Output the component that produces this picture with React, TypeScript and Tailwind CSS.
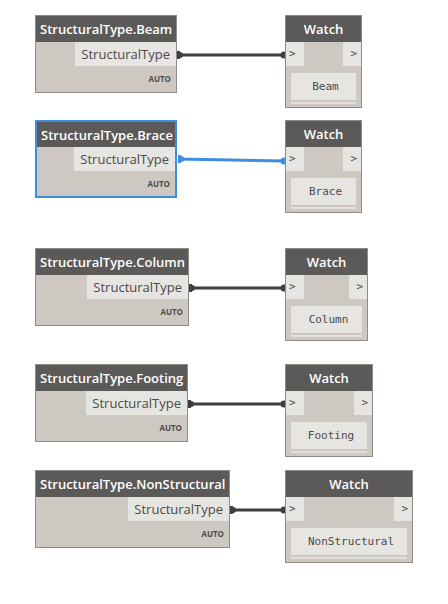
import React from "react";

type NodeProps = {
  x: number;
  y: number;
  width: number;
  title: string;
  selected?: boolean;
};

type WatchProps = {
  x: number;
  y: number;
  width: number;
  value: string;
};

const font = { fontFamily: '"Open Sans", "Liberation Sans", sans-serif' };
const mono = { fontFamily: '"DejaVu Sans Mono", "Liberation Mono", monospace' };

// code block node: header, one output port, lacing label
function CodeNode({ x, y, width, title, selected }: NodeProps) {
  return (
    <div
      className={
        "absolute flex flex-col bg-[#cdc9c2] " +
        (selected ? "border-2 border-[#3d8ee0]" : "border border-[#8f8c88]")
      }
      style={{ left: x, top: y, width, ...font }}
    >
      <div
        className={
          "bg-[#5c5a58] text-white font-semibold text-[13px] leading-[26px] px-[4px] whitespace-nowrap " +
          (selected ? "h-[25px] leading-[25px] px-[3px]" : "h-[26px]")
        }
      >
        {title}
      </div>
      <div className="flex justify-end h-[24px]">
        <div className="bg-[#e6e5e1] text-[#4a4a4a] text-[13px] leading-[24px] px-[6px] whitespace-nowrap">
          StructuralType
        </div>
      </div>
      <div
        className={
          "flex items-center justify-end pr-[5px] text-[8px] font-bold text-[#4f4d4b] " +
          (selected ? "h-[25px] pr-[4px]" : "h-[26px]")
        }
      >
        AUTO
      </div>
    </div>
  );
}

function WatchNode({ x, y, width, value }: WatchProps) {
  return (
    <div
      className="absolute flex flex-col bg-[#cdc9c2] border border-[#8f8c88] pb-[3px]"
      style={{ left: x, top: y, width, ...font }}
    >
      <div className="bg-[#5c5a58] text-white text-[13px] font-semibold h-[26px] leading-[26px] text-center">
        Watch
      </div>
      <div className="flex justify-between h-[24px] text-[11px] text-[#4a4a4a]">
        <div className="w-[18px] bg-[#e6e5e1] leading-[24px] pl-[3px]" style={mono}>
          &gt;
        </div>
        <div className="w-[18px] bg-[#e6e5e1] leading-[24px] text-right pr-[4px]" style={mono}>
          &gt;
        </div>
      </div>
      <div
        className="mx-[5px] mt-[7px] h-[27px] bg-[#e6e5e1] text-[11px] text-[#4a4a4a] leading-[27px] text-center pl-[4px]"
        style={mono}
      >
        {value}
      </div>
      <div className="mx-[5px] mt-[2px] h-[2px] bg-[#e2e0dc]" />
    </div>
  );
}

const wires = [
  { x1: 177, y1: 55, x2: 285, y2: 55, color: "#3f3f3f" },
  { x1: 178, y1: 159, x2: 285, y2: 161, color: "#3d8ee0" },
  { x1: 189, y1: 288, x2: 285, y2: 288, color: "#3f3f3f" },
  { x1: 188, y1: 404, x2: 285, y2: 404, color: "#3f3f3f" },
  { x1: 230, y1: 510, x2: 285, y2: 510, color: "#3f3f3f" },
];

export default function App() {
  return (
    <div className="relative w-[448px] h-[604px] bg-white overflow-hidden">
      <svg className="absolute inset-0" width={448} height={604}>
        {wires.map((w, i) => (
          <g key={i}>
            <line x1={w.x1} y1={w.y1} x2={w.x2} y2={w.y2} stroke={w.color} strokeWidth={3} />
            <rect x={w.x1} y={w.y1 - 4} width={3} height={8} fill={w.color} />
            <circle cx={w.x1 + 3} cy={w.y1} r={3} fill={w.color} />
            <circle cx={w.x2 - 1} cy={w.y2} r={3.5} fill={w.color} />
          </g>
        ))}
      </svg>

      <CodeNode x={35} y={15} width={142} title="StructuralType.Beam" />
      <WatchNode x={285} y={15} width={77} value="Beam" />

      <CodeNode x={35} y={120} width={142} title="StructuralType.Brace" selected />
      <WatchNode x={285} y={120} width={77} value="Brace" />

      <CodeNode x={35} y={248} width={154} title="StructuralType.Column" />
      <WatchNode x={285} y={248} width={83} value="Column" />

      <CodeNode x={35} y={364} width={153} title="StructuralType.Footing" />
      <WatchNode x={285} y={364} width={88} value="Footing" />

      <CodeNode x={35} y={470} width={195} title="StructuralType.NonStructural" />
      <WatchNode x={285} y={470} width={128} value="NonStructural" />
    </div>
  );
}
